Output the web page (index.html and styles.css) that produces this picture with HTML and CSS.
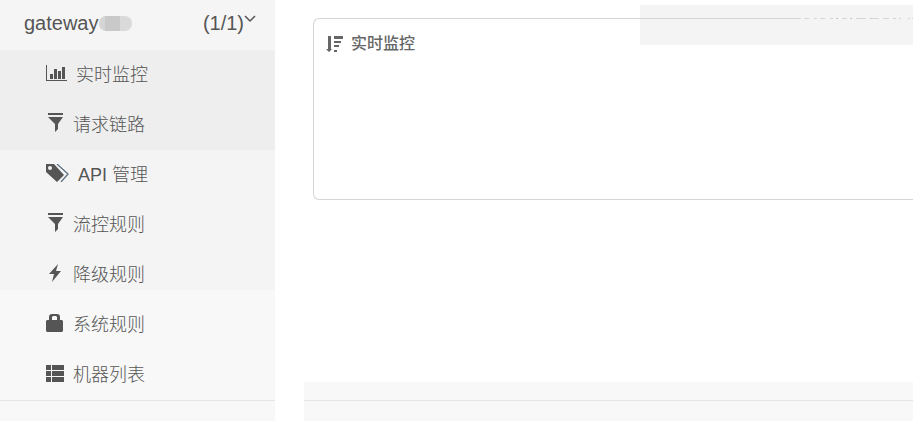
FILE: index.html
```html
<!DOCTYPE html>
<html lang="zh-CN">
<head>
    <meta charset="UTF-8">
    <meta name="viewport" content="width=device-width, initial-scale=1.0">
    <title>实时监控</title>
    <link rel="stylesheet" href="styles.css">
</head>
<body>
    <div class="wrapper">
        <aside class="sidebar">
            <button type="button" class="app-header">
                <span class="app-name">gateway</span>
                <span class="app-mask"></span>
                <span class="app-count">(1/1)</span>
                <svg class="arrow" width="12" height="8" viewBox="0 0 12 8"><path d="M1 1l5 5 5-5" fill="none" stroke="currentColor" stroke-width="1.5"/></svg>
            </button>
            <nav class="menu">
                <a href="#" class="menu-item active">
                    <svg width="21" height="18" viewBox="0 0 21 18"><path d="M0 1h1v15h20v1H0zM4 10h3v5H4zM8 5h3v10H8zM12 7h3v8h-3zM16 3h3v12h-3z"/></svg>
                    <span>实时监控</span>
                </a>
                <a href="#" class="menu-item active">
                    <svg width="18" height="20" viewBox="0 0 18 20"><path d="M2 0h15v2H2zM2 4h15l-5 7v5l-3 3v-8z"/></svg>
                    <span>请求链路</span>
                </a>
                <a href="#" class="menu-item">
                    <svg width="23" height="18" viewBox="0 0 23 18"><path fill-rule="evenodd" d="M0 0h8l10 11-7 7L0 8zM4 2a2 2 0 1 0 0 4 2 2 0 0 0 0-4z"/><path d="M11 0l11 10-7 8" fill="none" stroke="#5b7184" stroke-width="1.3"/></svg>
                    <span>API 管理</span>
                </a>
                <a href="#" class="menu-item">
                    <svg width="18" height="20" viewBox="0 0 18 20"><path d="M2 0h15v2H2zM2 4h15l-5 7v5l-3 3v-8z"/></svg>
                    <span>流控规则</span>
                </a>
                <a href="#" class="menu-item">
                    <svg width="18" height="18" viewBox="0 0 18 18"><path d="M12 0L3 10h5l-2 8 9-11h-5z"/></svg>
                    <span>降级规则</span>
                </a>
                <a href="#" class="menu-item">
                    <svg width="18" height="18" viewBox="0 0 18 18"><path fill-rule="evenodd" d="M3 6V3a3 3 0 0 1 3-3h5a3 3 0 0 1 3 3v3h2l1 1v10l-1 1H1l-1-1V7l1-1zM6 6h5V3l-1-1H7L6 3z"/></svg>
                    <span>系统规则</span>
                </a>
                <a href="#" class="menu-item">
                    <svg width="18" height="18" viewBox="0 0 18 18"><path d="M0 1h5v5H0zM6 1h12v5H6zM0 7h5v5H0zM6 7h12v5H6zM0 13h5v5H0zM6 13h12v5H6z"/></svg>
                    <span>机器列表</span>
                </a>
            </nav>
            <div class="sidebar-footer"></div>
        </aside>
        <main class="content">
            <section class="card">
                <h1 class="card-title">
                    <svg width="17" height="17" viewBox="0 0 17 17"><path d="M2 0h3v13h1l-3 3-3-3h2zM8 0h9v3H8zM8 5h7v2H8zM8 9h5v2H8zM8 14h3v2H8z"/></svg>
                    <span>实时监控</span>
                </h1>
            </section>
            <div class="mask">
                <svg class="mask-line" width="115" height="1" viewBox="0 0 115 1"><path d="M0 0h3v1H0zM6 0h5v1H6zM16 0h3v1h-3zM22 0h5v1h-5zM32 0h3v1h-3zM38 0h1v1h-1zM44 0h5v1h-5zM52 0h1v1h-1zM58 0h10v1H58zM73 0h8v1h-8zM85 0h6v1h-6zM95 0h3v1h-3zM101 0h2v1h-2zM110 0h2v1h-2zM114 0h1v1h-1z" fill="#d5d5d5"/><path d="M39 0h1v1h-1zM53 0h1v1h-1zM72 0h1v1h-1z" fill="#dba6ae"/></svg>
            </div>
            <footer class="footer"></footer>
        </main>
    </div>
</body>
</html>
```
FILE: styles.css
```css
* {
    box-sizing: border-box;
}
body {
    margin: 0;
    font-family: "Liberation Sans", "Noto Sans CJK SC", sans-serif;
    color: #555;
    background: #fff;
}
.wrapper {
    display: flex;
    min-height: 100vh;
}
.sidebar {
    display: flex;
    flex-direction: column;
    flex: 0 0 275px;
    background: linear-gradient(#f4f4f4 290px, #f8f8f8 290px);
}
.app-header {
    display: flex;
    align-items: center;
    height: 50px;
    padding: 0 19px 4px 24px;
    border: 0;
    background: #f5f5f5;
    color: inherit;
    font: inherit;
    font-size: 20px;
    text-align: left;
}
.app-mask {
    width: 33px;
    height: 15px;
    border-radius: 7px;
    background: linear-gradient(90deg, #d5d5d5 6px, #c9c9c9 6px, #c9c9c9 21px, #dadada 21px);
}
.app-count {
    margin-left: auto;
}
.arrow {
    margin-bottom: 8px;
}
.menu-item {
    display: flex;
    align-items: center;
    gap: 9px;
    height: 50px;
    padding: 0 46px 5px;
    color: inherit;
    font-size: 18px;
    font-weight: 300;
    text-decoration: none;
}
.menu-item.active {
    background: #eee;
}
.menu-item svg,
.card-title svg {
    fill: currentColor;
}
.sidebar-footer {
    flex: 1;
    border-top: 1px solid #e5e5e5;
}
.content {
    display: flex;
    flex-direction: column;
    flex: 1;
    position: relative;
    min-width: 0;
    padding: 18px 0 0 29px;
}
.card {
    height: 182px;
    margin-left: 9px;
    padding: 12px;
    border: 1px solid #d5d5d5;
    border-right: 0;
    border-radius: 6px 0 0 6px;
}
.card-title {
    display: flex;
    align-items: center;
    gap: 8px;
    margin: 0;
    font-size: 16px;
    line-height: 26px;
    font-weight: 500;
    color: #666;
}
.mask {
    position: absolute;
    top: 5px;
    right: 0;
    width: 273px;
    height: 40px;
    background: linear-gradient(#d5d5d5, #d5d5d5) 0 13px / 159px 1px no-repeat #f4f4f4;
}
.mask-line {
    position: absolute;
    top: 13px;
    right: 0;
}
.footer {
    height: 39px;
    margin-top: auto;
    background: linear-gradient(#e5e5e5, #e5e5e5) 0 18px / 100% 1px no-repeat #f8f8f8;
}
```
